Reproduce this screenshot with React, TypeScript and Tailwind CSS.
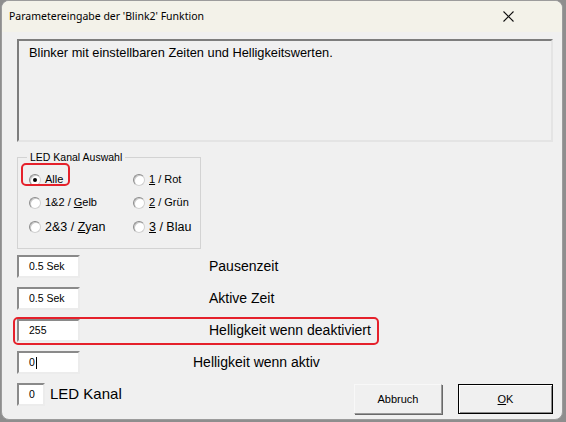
import { ReactNode } from 'react';

const sans = "font-['Liberation_Sans',Arial,sans-serif]";

function Radio({ checked, label, big }: { checked?: boolean; label: ReactNode; big?: boolean }) {
  return (
    <div className="flex items-center gap-[4px]">
      <span className="flex h-[12px] w-[12px] items-center justify-center rounded-full border border-t-[#8c8c8c] border-l-[#8c8c8c] border-r-[#d0d0d0] border-b-[#d0d0d0] bg-white shadow-[inset_1px_1px_0_#c8c8c8]">
        {checked && <span className="h-[4px] w-[4px] rounded-full bg-black" />}
      </span>
      <span className={`${big ? 'text-[12.5px]' : 'text-[11px]'} leading-none text-black`}>{label}</span>
    </div>
  );
}

function Field({ value, w = 'w-[63px]', caret }: { value: string; w?: string; caret?: boolean }) {
  return (
    <div className={`${w} flex h-[23px] shrink-0 items-center border-2 border-t-[#8a8a8a] border-l-[#8a8a8a] border-r-[#ececec] border-b-[#ececec] bg-white pl-[10px] text-[10.5px] text-black`}>
      {value}
      {caret && <span className="ml-[1px] h-[12px] w-[1px] bg-black" />}
    </div>
  );
}

export default function App() {
  return (
    <div className={`h-[422px] w-[566px] overflow-hidden bg-[#8e8e8e] ${sans}`}>
      <div className="ml-[1px] flex h-[420px] w-[562px] flex-col overflow-hidden rounded-[8px] border border-[#9c9c9c] bg-[#f0f0f0]">
        {/* title bar */}
        <div className="flex h-[31px] shrink-0 items-center justify-between bg-[#f3f2e9] pl-[7px] pr-[48px]">
          <span className="font-['Noto_Sans',sans-serif] text-[10.5px] text-black">
            Parametereingabe der 'Blink2' Funktion
          </span>
          <svg width="11" height="11" viewBox="0 0 11 11">
            <path d="M0.5 0.5 L10.5 10.5 M10.5 0.5 L0.5 10.5" stroke="#111" strokeWidth="1.1" />
          </svg>
        </div>

        <div className="flex flex-col pl-[15px] pr-[9px]">
          {/* description */}
          <div className="mt-[7px] h-[103px] border-2 border-t-[#7d7d7d] border-l-[#7d7d7d] border-r-[#e4e4e4] border-b-[#e4e4e4] pl-[10px] pt-[4px] text-[12.8px] leading-[15px] text-black">
            Blinker mit einstellbaren Zeiten und Helligkeitswerten.
          </div>

          {/* group box */}
          <div className="relative mt-[15px] h-[92px] w-[184px] border border-[#d3d3d3] pl-[11px] pt-[10px]">
            <span className="absolute -top-[7px] left-[9px] bg-[#f0f0f0] px-[3px] text-[10.5px] leading-[13px] text-black">
              LED Kanal Auswahl
            </span>
            <div className="grid grid-cols-[104px_1fr] grid-rows-[23px_23px_26px] items-center">
              <div className="relative">
                <span className="absolute -left-[8px] -top-[11px] h-[23px] w-[49px] rounded-[5px] border-2 border-[#e5212b]" />
                <Radio checked label={<><span className="underline">A</span>lle</>} />
              </div>
              <Radio label={<><span className="underline">1</span> / Rot</>} />
              <Radio label={<>1&amp;2 / <span className="underline">G</span>elb</>} />
              <Radio label={<><span className="underline">2</span> / Grün</>} />
              <Radio big label={<>2&amp;3 / <span className="underline">Z</span>yan</>} />
              <Radio big label={<><span className="underline">3</span> / Blau</>} />
            </div>
          </div>

          {/* parameters */}
          <div className="mt-[6px] flex flex-col gap-[9px]">
            <div className="flex items-center">
              <Field value="0.5 Sek" />
              <span className="ml-[129px] text-[14px] text-black">Pausenzeit</span>
            </div>
            <div className="flex items-center">
              <Field value="0.5 Sek" />
              <span className="ml-[129px] text-[14px] text-black">Aktive Zeit</span>
            </div>
            <div className="relative flex items-center">
              <span className="absolute -left-[4px] -top-[2px] h-[28px] w-[366px] rounded-[5px] border-2 border-[#e5212b]" />
              <Field value="255" />
              <span className="ml-[129px] text-[14px] text-black">Helligkeit wenn deaktiviert</span>
            </div>
            <div className="flex items-center">
              <Field value="0" caret />
              <span className="ml-[113px] text-[14px] text-black">Helligkeit wenn aktiv</span>
            </div>
            <div className="flex items-start justify-between">
              <div className="flex items-center">
                <Field value="0" w="w-[28px]" />
                <span className="ml-[5px] text-[15px] text-black">LED Kanal</span>
              </div>
              <div className="mt-[1px] flex gap-[16px]">
                <button className="flex h-[30px] w-[88px] items-center justify-center border border-t-[#f8f8f8] border-l-[#f8f8f8] border-r-[#9a9a9a] border-b-[#9a9a9a] bg-[#f0f0f0] text-[11px] text-black shadow-[1px_1px_0_#696969]">
                  Abbruch
                </button>
                <button className="flex h-[30px] w-[95px] items-center justify-center border border-black bg-[#f0f0f0] text-[11px] text-black shadow-[inset_1px_1px_0_#ffffff,inset_-1px_-1px_0_#8a8a8a]">
                  <span><span className="underline">O</span>K</span>
                </button>
              </div>
            </div>
          </div>
        </div>
      </div>
    </div>
  );
}
